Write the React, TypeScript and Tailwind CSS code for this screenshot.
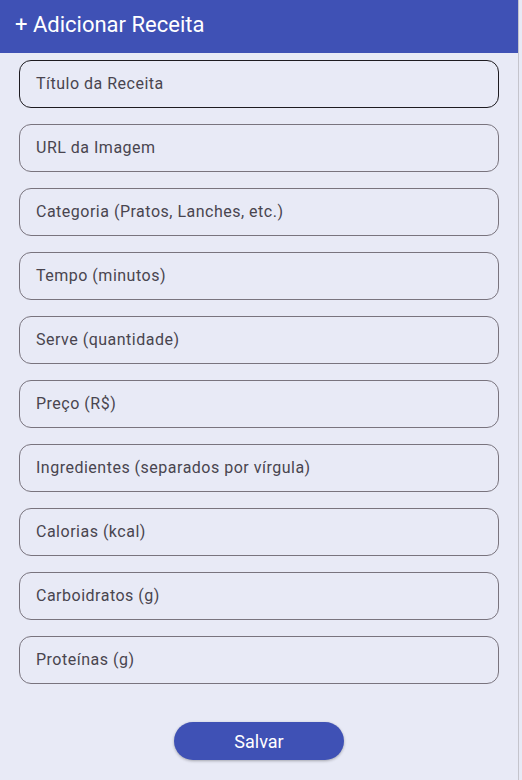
const fields = [
  "Título da Receita",
  "URL da Imagem",
  "Categoria (Pratos, Lanches, etc.)",
  "Tempo (minutos)",
  "Serve (quantidade)",
  "Preço (R$)",
  "Ingredientes (separados por vírgula)",
  "Calorias (kcal)",
  "Carboidratos (g)",
  "Proteínas (g)",
];

const Field = ({ label, focused }: { label: string; focused?: boolean }) => {
  return (
    <div
      className={
        focused
          ? "h-12 w-[480px] rounded-xl border border-[#1d1b20] flex items-center px-4"
          : "h-12 w-[480px] rounded-xl border border-[#79747e] flex items-center px-4"
      }
    >
      <span className="text-[16px] text-[#49454f] tracking-[0.5px]">{label}</span>
    </div>
  );
};

export default function App() {
  return (
    <div className="min-h-[780px] bg-[#e8eaf6] font-['Roboto',sans-serif]">
      <div className="w-[519px] min-h-[780px] border-r border-[#c4c4cc] flex flex-col">
        <header className="h-[53px] bg-[#3f51b5] flex items-center pl-[15px] pb-[3px]">
          <h1 className="text-white text-[22px] leading-none">+ Adicionar Receita</h1>
        </header>
        <main className="flex flex-col pt-[7px] pl-[19px]">
          <div className="flex flex-col gap-4">
            {fields.map((f, i) => (
              <Field key={f} label={f} focused={i === 0} />
            ))}
          </div>
        </main>
        <div className="flex justify-center mt-[38px]">
          <button className="w-[170px] h-[38px] rounded-full bg-[#3f51b5] text-white text-[18px] shadow-[0_1px_3px_rgba(0,0,0,0.3)]">
            Salvar
          </button>
        </div>
      </div>
    </div>
  );
}
